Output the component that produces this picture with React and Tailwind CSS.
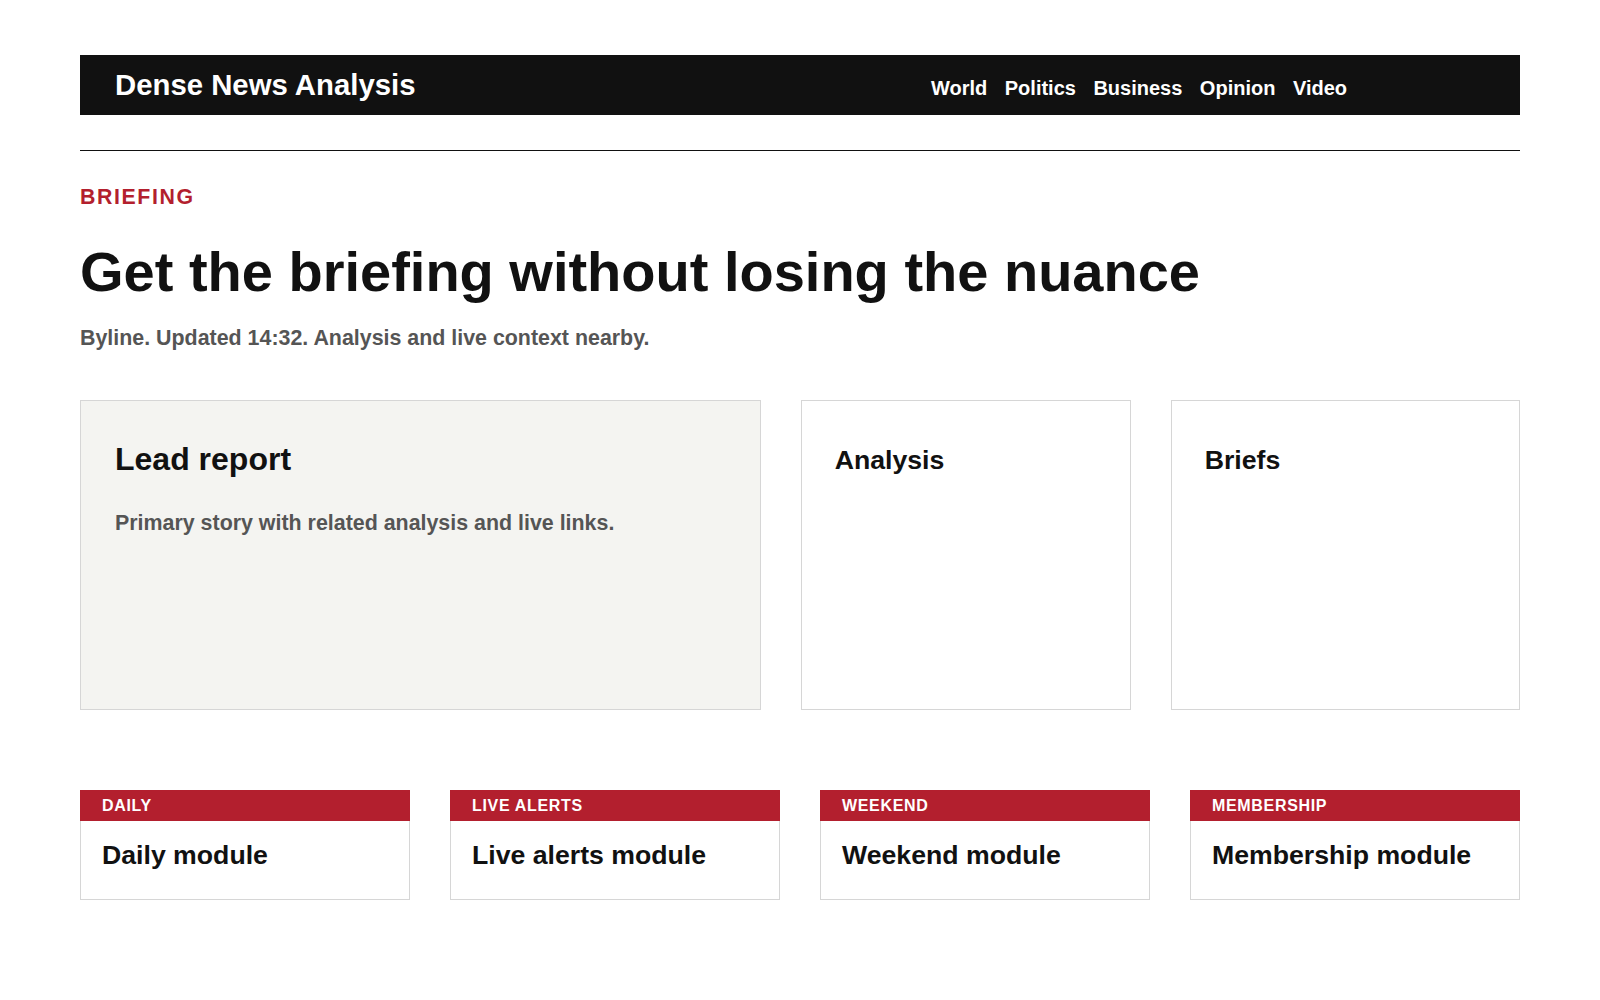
const navItems = ["World", "Politics", "Business", "Opinion", "Video"];

const modules = [
  { label: "Daily", title: "Daily module" },
  { label: "Live alerts", title: "Live alerts module" },
  { label: "Weekend", title: "Weekend module" },
  { label: "Membership", title: "Membership module" },
];

function ModuleCard({ label, title }) {
  return (
    <div className="flex h-[110px] flex-col">
      <div className="h-[31px] bg-[#b31f2e] px-[22px] pt-[8.8px] text-[16px] leading-none uppercase tracking-[0.67px] text-white">
        {label}
      </div>
      <div className="flex-1 border border-t-0 border-[#d6d6d6] px-[21px] pt-[21.5px]">
        <h3 className="text-[26.67px] leading-none">{title}</h3>
      </div>
    </div>
  );
}

export default function App() {
  return (
    <div className="min-h-screen bg-white font-['Liberation_Sans',Arial,sans-serif] font-bold text-[#111]">
      <div className="mx-auto w-[1440px] pt-[55px] pb-[100px]">
        {/* top bar */}
        <header className="flex h-[60px] items-baseline bg-[#111] pl-[35px] pr-[33px] pt-[15.2px]">
          <h1 className="text-[29.33px] leading-none text-white">
            Dense News Analysis
          </h1>
          <nav className="ml-auto mr-[140px] flex gap-[17.5px] text-[20px] leading-none text-white">
            {navItems.map((item) => (
              <a key={item} href="#">
                {item}
              </a>
            ))}
          </nav>
        </header>

        <div className="mt-[35px] h-px bg-[#111]"></div>

        <p className="mt-[36.2px] text-[21.33px] leading-none uppercase tracking-[1.6px] text-[#b31f2e]">
          Briefing
        </p>
        <h2 className="mt-[35px] text-[56px] leading-none">
          Get the briefing without losing the nuance
        </h2>
        <p className="mt-[28.5px] text-[21.4px] leading-none text-[#555]">
          Byline. Updated 14:32. Analysis and live context nearby.
        </p>

        {/* main cards */}
        <div className="mt-[50.1px] grid grid-cols-[680.67px_330px_349.33px] gap-[40px]">
          <section className="h-[310.67px] border border-[#d6d6d6] bg-[#f4f4f1] pl-[34px] pr-[33px] pt-[42.9px]">
            <h2 className="text-[32px] leading-none">Lead report</h2>
            <p className="mt-[37.5px] text-[21.4px] leading-none text-[#555]">
              Primary story with related analysis and live links.
            </p>
          </section>
          <section className="h-[310.67px] border border-[#d6d6d6] bg-white px-[33px] pt-[46.5px]">
            <h2 className="text-[26.67px] leading-none">Analysis</h2>
          </section>
          <section className="h-[310.67px] border border-[#d6d6d6] bg-white px-[33px] pt-[46.5px]">
            <h2 className="text-[26.67px] leading-none">Briefs</h2>
          </section>
        </div>

        {/* modules */}
        <div className="mt-[79.33px] grid grid-cols-4 gap-[40px]">
          {modules.map((m) => (
            <ModuleCard key={m.label} label={m.label} title={m.title} />
          ))}
        </div>
      </div>
    </div>
  );
}
